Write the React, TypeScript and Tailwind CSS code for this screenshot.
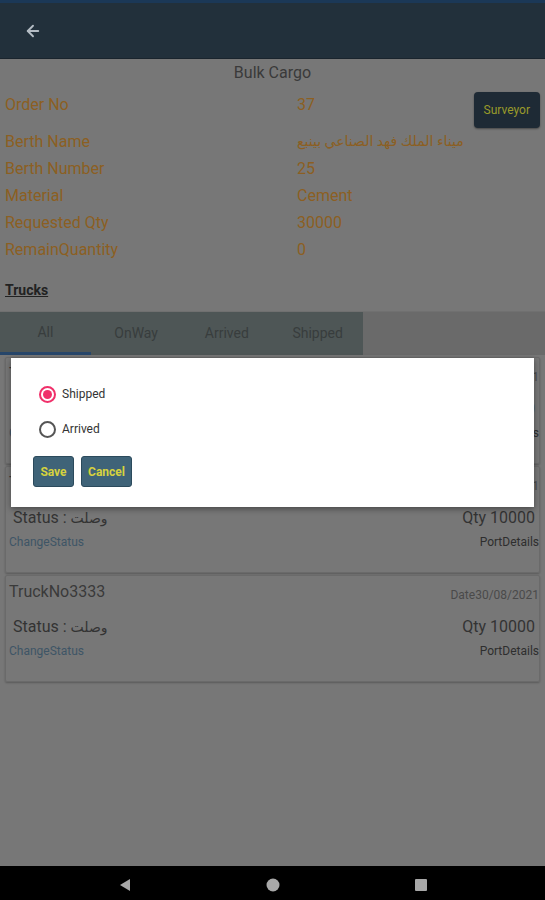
import { ArrowLeft } from 'lucide-react'

const font = { fontFamily: 'Roboto, "DejaVu Sans", sans-serif' }

const details: [string, string][] = [
  ['Berth Name', 'ميناء الملك فهد الصناعي بينبع'],
  ['Berth Number', '25'],
  ['Material', 'Cement'],
  ['Requested Qty', '30000'],
  ['RemainQuantity', '0'],
]

const trucks = ['TruckNo3331', 'TruckNo3332', 'TruckNo3333']

function TruckCard({ no }: { no: string }) {
  return (
    <div className="h-[107px] mx-[5px] mb-[2px] border border-[#6a6a6a] rounded-[2px] shadow-[0_1px_2px_rgba(0,0,0,0.25)] flex flex-col">
      <div className="flex items-center justify-between pl-[3px] pr-0 pt-[4px]">
        <span className="text-[16px] text-[#3a3a3a]">{no}</span>
        <span className="text-[12px] text-[#4a4a4a] mt-[5px]">Date30/08/2021</span>
      </div>
      <div className="flex items-center justify-between pl-[7px] pr-[4px] mt-[11px]">
        <span className="text-[16px] text-[#333]">
          Status : <span className="text-[14px]">وصلت</span>
        </span>
        <span className="text-[16px] text-[#333]">Qty 10000</span>
      </div>
      <div className="flex items-center justify-between pl-[3px] pr-0 mt-[3px]">
        <span className="text-[12px] text-[#3e5566]">ChangeStatus</span>
        <span className="text-[12px] text-[#2e2e2e]">PortDetails</span>
      </div>
    </div>
  )
}

export default function App() {
  return (
    <div className="relative w-[545px] h-[900px] bg-[#777777] flex flex-col overflow-hidden" style={font}>
      {/* status strip + toolbar */}
      <div className="h-[3px] bg-[#1b3857]" />
      <div className="h-[56px] bg-[#22303b] flex items-center pl-[24px] border-b border-[#1a242d]">
        <ArrowLeft size={18} strokeWidth={2.5} className="text-[#b4bcc4]" />
      </div>

      <div className="text-center text-[16px] text-[#3a3a3a] mt-[4px] leading-[19px]">Bulk Cargo</div>

      {/* details */}
      <div className="flex items-center h-[42px] mt-[2px]">
        <span className="w-[297px] pl-[5px] text-[16px] text-[#8c5f22]">Order No</span>
        <span className="flex-1 text-[16px] text-[#8c5f22]">37</span>
        <button className="mr-[5px] mt-[10px] h-[36px] px-[10px] rounded-[4px] bg-[#1e2a35] text-[#9a9a2a] text-[12px] shadow-[0_1px_2px_rgba(0,0,0,0.4)]">
          Surveyor
        </button>
      </div>
      <div className="flex flex-col mt-[2px]">
        {details.map(([k, v]) => (
          <div key={k} className="flex items-center h-[27px]">
            <span className="w-[297px] pl-[5px] text-[16px] text-[#8c5f22]">{k}</span>
            <span className="text-[16px] text-[#8c5f22]" style={k === 'Berth Name' ? { fontSize: 14 } : undefined}>{v}</span>
          </div>
        ))}
      </div>

      <div className="pl-[5px] mt-[18px] text-[14px] font-bold text-[#222] underline leading-[18px]">Trucks</div>

      {/* tabs */}
      <div className="flex mt-[12px] h-[44px] bg-[#6a6a6a] border-t border-[#707070]">
        <div className="w-[363px] flex bg-[#4e5656]">
          {['All', 'OnWay', 'Arrived', 'Shipped'].map((t, i) => (
            <div key={t} className={`flex-1 flex items-center justify-center text-[14px] text-[#383d3d] ${i === 0 ? 'border-b-[3px] border-[#27466a]' : ''}`}>
              {t}
            </div>
          ))}
        </div>
      </div>

      {/* truck list */}
      <div className="flex flex-col pt-[2px]">
        {trucks.map(t => <TruckCard key={t} no={t} />)}
      </div>

      <div className="flex-1" />

      {/* android nav */}
      <div className="h-[34px] bg-black flex items-center justify-center gap-[134px] pt-[3px]">
        <svg width="14" height="14" viewBox="0 0 14 14"><polygon points="12,1 12,13 2,7" fill="#a8a8a8" /></svg>
        <svg width="14" height="14" viewBox="0 0 14 14"><circle cx="7" cy="7" r="6.5" fill="#a8a8a8" /></svg>
        <svg width="14" height="14" viewBox="0 0 14 14"><rect x="1" y="1" width="12" height="12" rx="1" fill="#a8a8a8" /></svg>
      </div>

      {/* dialog */}
      <div className="absolute left-[11px] top-[358px] w-[523px] h-[149px] bg-white shadow-[0_2px_6px_rgba(0,0,0,0.4)] pl-[22px] pt-[27px]">
        <div className="flex flex-col gap-[17px] pl-[6px]">
          <label className="flex items-center gap-[6px] h-[18px]">
            <span className="w-[17px] h-[17px] rounded-full border-2 border-[#f0306a] flex items-center justify-center">
              <span className="w-[9px] h-[9px] rounded-full bg-[#f0306a]" />
            </span>
            <span className="text-[12px] text-[#333]">Shipped</span>
          </label>
          <label className="flex items-center gap-[6px] h-[18px]">
            <span className="w-[17px] h-[17px] rounded-full border-2 border-[#555]" />
            <span className="text-[12px] text-[#333]">Arrived</span>
          </label>
        </div>
        <div className="flex gap-[7px] mt-[18px]">
          <button className="h-[31px] w-[41px] rounded-[3px] bg-[#3f6378] border border-[#2b4a5c] text-[#d6d23e] text-[12px] font-bold">Save</button>
          <button className="h-[31px] w-[51px] rounded-[3px] bg-[#3f6378] border border-[#2b4a5c] text-[#d6d23e] text-[12px] font-bold">Cancel</button>
        </div>
      </div>
    </div>
  )
}
